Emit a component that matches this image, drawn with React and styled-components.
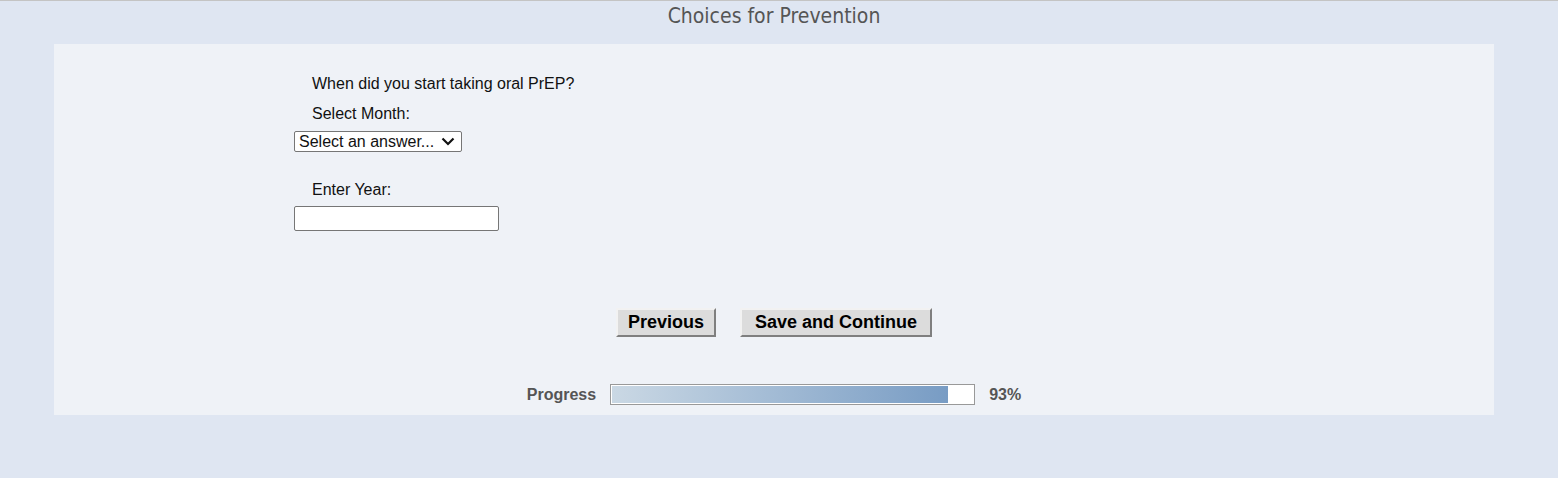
import React from "react";
import styled, { createGlobalStyle } from "styled-components";

const GlobalStyle = createGlobalStyle`
  html, body {
    margin: 0;
    padding: 0;
    background: #dfe6f2;
  }
  body {
    border-top: 1px solid #c4c4c4;
    font-family: "Liberation Sans", Arial, sans-serif;
    min-height: 477px;
  }
`;

const Page = styled.div`
  width: 1440px;
  margin-left: 54px;
`;

const Title = styled.h1`
  margin: 0;
  padding: 3px 0 0;
  height: 43px;
  box-sizing: border-box;
  text-align: center;
  font-family: "DejaVu Sans Condensed", "DejaVu Sans", Tahoma, sans-serif;
  font-weight: normal;
  font-size: 21px;
  line-height: 24px;
  color: #555;
`;

const Panel = styled.div`
  background: #eff2f7;
  height: 371px;
  box-sizing: border-box;
  padding-top: 31px;
  display: flex;
  flex-direction: column;
`;

const Form = styled.div`
  padding-left: 240px;
  display: flex;
  flex-direction: column;
  align-items: flex-start;
`;

const Label = styled.div`
  padding-left: 18px;
  font-size: 16px;
  line-height: 18px;
  color: #111;
  margin-top: ${(p) => p.$top || 0}px;
`;

const SelectWrap = styled.div`
  position: relative;
  margin-top: 8px;
  width: 168px;
  height: 21px;
`;

const Select = styled.select`
  appearance: none;
  width: 168px;
  height: 21px;
  box-sizing: border-box;
  font-family: "Liberation Sans", Arial, sans-serif;
  font-size: 16px;
  line-height: 19px;
  color: #111;
  background: #fff;
  border: 1px solid #767676;
  border-radius: 2px;
  padding: 0 4px;
`;

const Chevron = styled.svg`
  position: absolute;
  right: 7px;
  top: 6px;
  width: 14px;
  height: 9px;
  pointer-events: none;
`;

const YearInput = styled.input`
  margin-top: 7px;
  width: 205px;
  height: 25px;
  box-sizing: border-box;
  border: 1px solid #767676;
  border-radius: 2px;
  background: #fff;
  font-size: 16px;
`;

const Buttons = styled.div`
  margin-top: 77px;
  display: flex;
  justify-content: center;
  gap: 24px;
`;

const Button = styled.button`
  width: ${(p) => p.$w}px;
  height: 29px;
  box-sizing: border-box;
  font-family: "Liberation Sans", Arial, sans-serif;
  font-weight: bold;
  font-size: 18px;
  color: #000;
  background: #dcdcdc;
  border: 2px solid;
  border-color: #f2f2f2 #7f7f7f #7f7f7f #f2f2f2;
  padding: 0;
  cursor: pointer;
`;

const ProgressRow = styled.div`
  margin-top: 47px;
  display: flex;
  justify-content: center;
  align-items: center;
  gap: 14px;
  font-size: 16px;
  font-weight: bold;
  color: #555;
`;

const Bar = styled.div`
  width: 365px;
  height: 21px;
  box-sizing: border-box;
  border: 1px solid #999;
  background: #fff;
  padding: 1px;
  display: flex;
`;

const Fill = styled.div`
  height: 100%;
  background: linear-gradient(to right, #cad8e4, #789cc4);
`;

export default function App() {
  const pct = 93;
  return (
    <>
      <GlobalStyle />
      <Page>
        <Title>Choices for Prevention</Title>
        <Panel>
          <Form>
            <Label>When did you start taking oral PrEP?</Label>
            <Label $top={12}>Select Month:</Label>
            <SelectWrap>
              <Select defaultValue="">
                <option value="">Select an answer...</option>
              </Select>
              <Chevron viewBox="0 0 14 9">
                <path d="M1.5 1.5 L7 7 L12.5 1.5" fill="none" stroke="#111" strokeWidth="2.2" />
              </Chevron>
            </SelectWrap>
            <Label $top={29}>Enter Year:</Label>
            <YearInput type="text" />
          </Form>
          <Buttons>
            <Button $w={100}>Previous</Button>
            <Button $w={192}>Save and Continue</Button>
          </Buttons>
          <ProgressRow>
            <span>Progress</span>
            <Bar>
              <Fill style={{ width: `${pct}%` }} />
            </Bar>
            <span>{pct}%</span>
          </ProgressRow>
        </Panel>
      </Page>
    </>
  );
}
